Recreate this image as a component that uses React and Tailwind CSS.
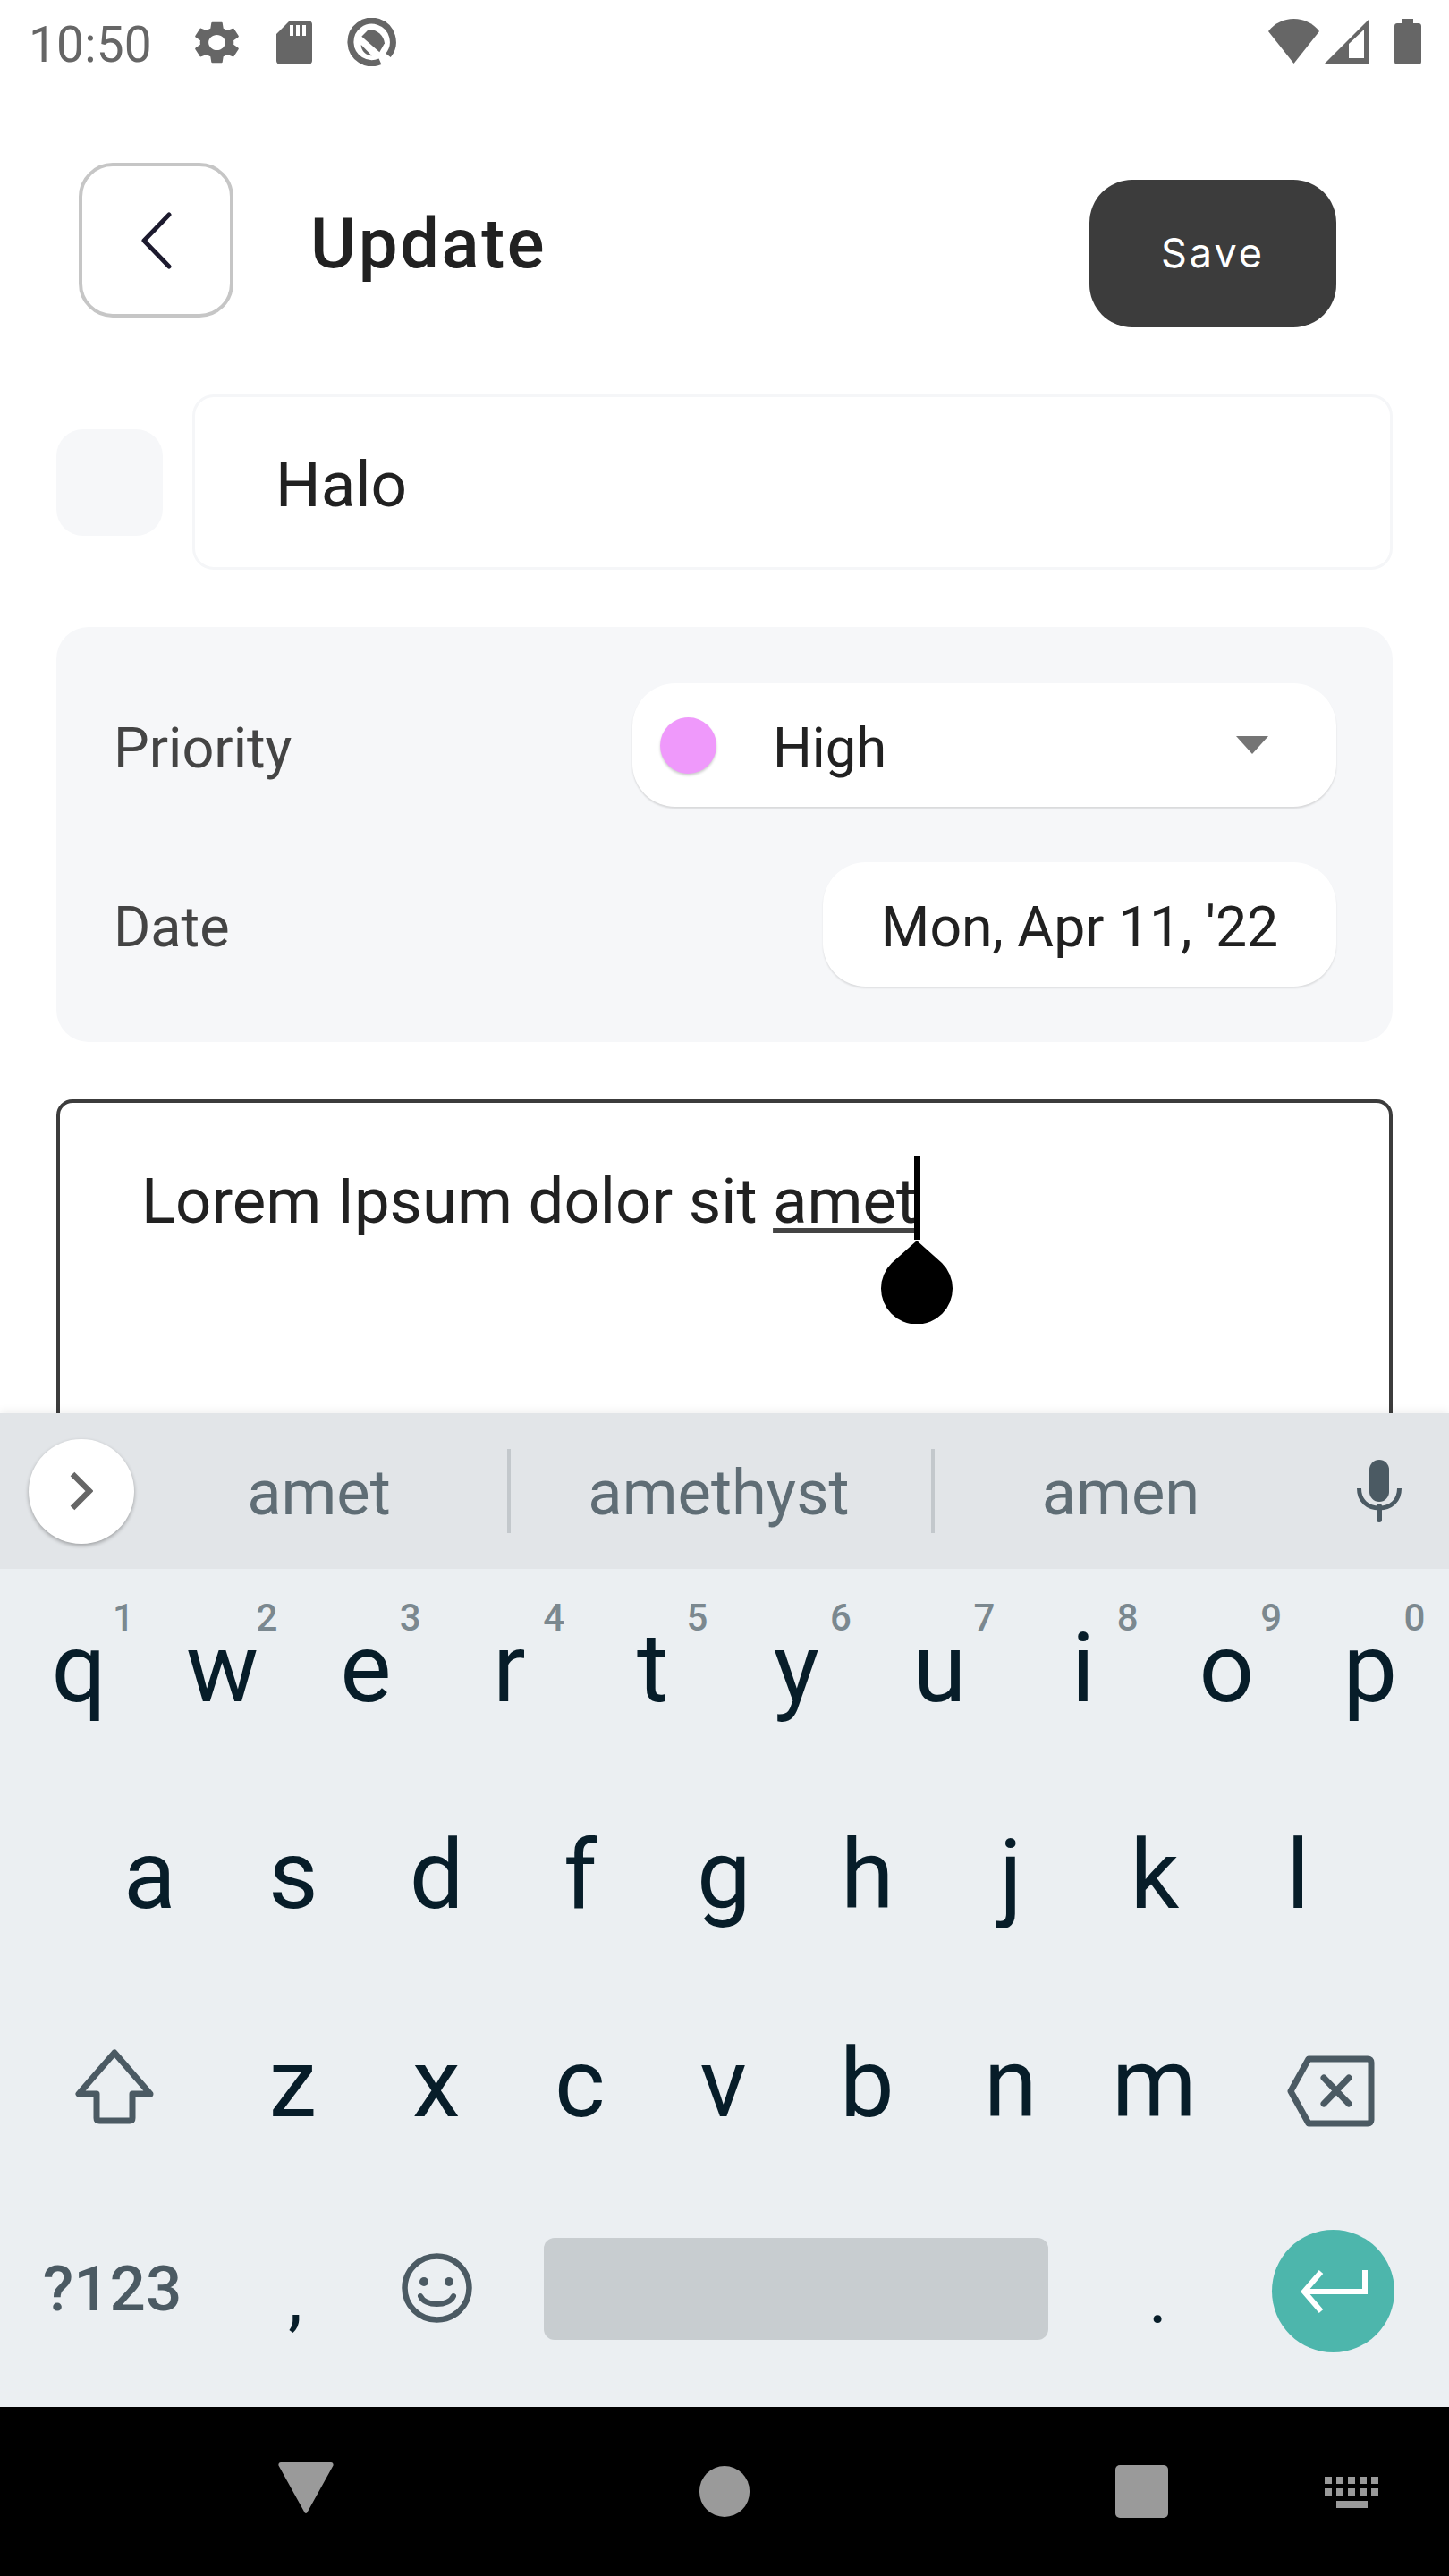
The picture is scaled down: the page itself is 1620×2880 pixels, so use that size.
const row1 = [['q','1'],['w','2'],['e','3'],['r','4'],['t','5'],['y','6'],['u','7'],['i','8'],['o','9'],['p','0']];
const row2 = ['a','s','d','f','g','h','j','k','l'];
const row3 = ['z','x','c','v','b','n','m'];

function Letter({ ch, digit, className }) {
  return (
    <div className={`relative flex h-full items-center justify-center text-[108px] text-[#071d29] ${className}`}>
      <span className="leading-[120px]">{ch}</span>
      {digit ? <span className="absolute left-[118px] top-[34px] text-[42px] font-medium leading-[42px] text-[#7b888f]">{digit}</span> : null}
    </div>
  );
}

function StatusBar() {
  return (
    <div className="flex h-[100px] shrink-0 items-start justify-between pl-[32px] pr-[31px] pt-[20px] text-[#666666]">
      <div className="flex items-start">
        <span className="text-[55px] leading-[60px] tracking-[0.2px]">10:50</span>
        <svg className="ml-[48px] mt-[3px] h-[49px] w-[49px]" viewBox="2.6 1.7 18.8 20.6" preserveAspectRatio="none" fill="currentColor">
          <path fillRule="evenodd" d="M19.14 12.94c.04-.3.06-.61.06-.94 0-.32-.02-.64-.07-.94l2.03-1.58c.18-.14.23-.41.12-.61l-1.92-3.32c-.12-.22-.37-.29-.59-.22l-2.39.96c-.5-.38-1.03-.7-1.62-.94l-.36-2.54c-.04-.24-.24-.41-.48-.41h-3.84c-.24 0-.43.17-.47.41l-.36 2.54c-.59.24-1.13.57-1.62.94l-2.39-.96c-.22-.08-.47 0-.59.22L2.74 8.87c-.12.21-.08.47.12.61l2.03 1.58c-.05.3-.09.63-.09.94s.02.64.07.94l-2.03 1.58c-.18.14-.23.41-.12.61l1.92 3.32c.12.22.37.29.59.22l2.39-.96c.5.38 1.03.7 1.62.94l.36 2.54c.05.24.24.41.48.41h3.84c.24 0 .44-.17.47-.41l.36-2.54c.59-.24 1.13-.56 1.62-.94l2.39.96c.22.08.47 0 .59-.22l1.92-3.32c.12-.22.07-.47-.12-.61l-2.01-1.58zM12 15.6c-1.98 0-3.6-1.62-3.6-3.6s1.62-3.6 3.6-3.6 3.6 1.62 3.6 3.6-1.62 3.6-3.6 3.6z" />
        </svg>
        <svg className="ml-[42px] mt-[3px] h-[49px] w-[40px]" viewBox="0 0 40 49" fill="currentColor">
          <path fillRule="evenodd" d="M15 0H36C38.2 0 40 1.8 40 4V45C40 47.2 38.2 49 36 49H4C1.800 49 0 47.2 0 45V15ZM15 5V17H19V5ZM22 5V17H26V5ZM29 5V17H33V5Z" />
        </svg>
        <svg className="ml-[39px] mt-0 h-[54px] w-[55px]" viewBox="0 0 55 54" fill="none">
          <path d="M37 48.700A23.700 23.700 0 1 1 46 41.900" stroke="#666666" strokeWidth="7" />
          <path d="M16.300 20.700L23.700 13.300C33 12.500 41 19 42 28.300L36.300 38.300Z" fill="#666666" />
          <path d="M15.700 30L27.700 42.300C22 42.500 15.500 37 15.700 30Z" fill="#666666" />
        </svg>
      </div>
      <div className="flex items-start">
        <svg className="mt-[1px] h-[50px] w-[57px]" viewBox="0 0 57 50" fill="#666666">
          <path d="M0 14C7 5 17 0 28.500 0C40 0 50 5 57 14L28.500 50Z" />
        </svg>
        <svg className="ml-[6px] mt-[2px] h-[49px] w-[49px]" viewBox="0 0 49 49" fill="#666666">
          <path fillRule="evenodd" d="M49 0V49H0ZM44 11L27 27V43H44Z" />
        </svg>
        <svg className="ml-[29px] mt-[1px] h-[51px] w-[30px]" viewBox="0 0 30 51" fill="#666666">
          <path d="M9 0H21V5H27C28.700 5 30 6.300 30 8V48C30 49.700 28.700 51 27 51H3C1.300 51 0 49.700 0 48V8C0 6.300 1.300 5 3 5H9Z" />
        </svg>
      </div>
    </div>
  );
}

function Header() {
  return (
    <div className="flex shrink-0 items-start justify-between pl-[88px] pr-[126px] pt-[82px]">
      <div className="flex items-start">
        <button className="flex h-[173px] w-[173px] items-center justify-center rounded-[38px] border-[4px] border-[#c6c6c6] bg-white">
          <svg className="h-[66px] w-[38px]" viewBox="0 0 38 66" fill="none">
            <path d="M33 4L5 33L33 62" stroke="#1c1a2e" strokeWidth="5" strokeLinecap="round" strokeLinejoin="round" />
          </svg>
        </button>
        <h1 className="ml-[86px] mt-[45px] text-[78px] font-medium leading-[92px] tracking-[2.6px] text-[#212121]">Update</h1>
      </div>
      <button className="mt-[19px] flex h-[165px] w-[276px] items-center justify-center rounded-[48px] bg-[#3c3c3c] pb-[2px] font-[Inter,sans-serif] text-[45px] tracking-[3px] text-white">Save</button>
    </div>
  );
}

function Fields() {
  return (
    <div className="shrink-0 px-[63px]">
      <div className="mt-[75px] flex items-center">
        <div className="h-[119px] w-[119px] rounded-[30px] bg-[#f6f7f9]" />
        <div className="ml-[33px] flex h-[196px] flex-1 items-center rounded-[24px] border-[3px] border-[#f5f6f8] bg-white pl-[90px] pt-[7px] text-[71px] text-[#212121]">Halo</div>
      </div>
      <div className="mt-[64px] flex h-[464px] flex-col gap-[62px] rounded-[36px] bg-[#f6f7f9] pl-[64px] pr-[63px] pt-[63px]">
        <div className="flex h-[138px] items-center justify-between">
          <span className="pt-[8px] text-[63px] text-[#444444]">Priority</span>
          <div className="flex h-[138px] w-[787px] items-center rounded-[48px] bg-white pl-[31px] shadow-[0_2px_2px_rgba(0,0,0,0.12)]">
            <span className="h-[63px] w-[63px] rounded-full bg-[#ef99fb] shadow-[0_2px_3px_rgba(0,0,0,0.2)]" />
            <span className="ml-[63px] flex-1 pt-[6px] text-[61.5px] text-[#212121]">High</span>
            <svg className="mr-[76px] h-[20px] w-[36px]" viewBox="0 0 36 20" fill="#757575"><path d="M0 0H36L18 20Z" /></svg>
          </div>
        </div>
        <div className="flex h-[139px] items-center justify-between">
          <span className="pt-[8px] text-[63px] text-[#444444]">Date</span>
          <div className="flex h-[139px] w-[574px] items-center justify-center rounded-[48px] bg-white pt-[7px] text-[62.5px] text-[#212121] shadow-[0_2px_2px_rgba(0,0,0,0.1)]">Mon, Apr 11, '22</div>
        </div>
      </div>
    </div>
  );
}

function Editor() {
  return (
    <div className="mx-[63px] mt-[64px] h-[600px] shrink-0 rounded-[18px] border-[4px] border-[#3c3c3c] bg-white pl-[91px] pt-[70px] text-[70.7px] leading-[80px] text-[#212121]">
      <span>Lorem Ipsum dolor sit <span className="underline decoration-[5px] decoration-[#444444] underline-offset-[6px]">amet</span></span>
      <span className="absolute left-[1022px] top-[1292px] h-[94px] w-[7px] bg-black" />
      <svg className="absolute left-[985px] top-[1387px] h-[93px] w-[80px]" viewBox="0 0 80 93" fill="#000">
        <path d="M40 0L12 25A40 40 0 1 0 68 25Z" />
      </svg>
    </div>
  );
}

function Suggestions() {
  return (
    <div className="relative flex h-[174px] shrink-0 items-center bg-[#e2e5e8] text-[70.5px] text-[#5f6d75]">
      <div className="ml-[32px] flex h-[117px] w-[118px] items-center justify-center rounded-full bg-white shadow-[0_2px_4px_rgba(0,0,0,0.3)]">
        <svg className="h-[44px] w-[26px]" viewBox="0 0 26 44" fill="none"><path d="M3 3L22 22L3 41" stroke="#666666" strokeWidth="6.500" /></svg>
      </div>
      <div className="ml-[18px] flex w-[399px] justify-center pr-[22px] pt-[5px]">amet</div>
      <div className="h-[94px] w-[4px] bg-[#c3c8cc]" />
      <div className="flex w-[470px] justify-center pr-[5px] pt-[5px]">amethyst</div>
      <div className="h-[94px] w-[4px] bg-[#c3c8cc]" />
      <div className="flex w-[472px] justify-center pr-[56px] pt-[5px]">amen</div>
      <svg className="ml-[0px] h-[70px] w-[50px]" viewBox="0 0 50 70" fill="none">
        <rect x="14" y="0" width="22" height="47" rx="11" fill="#4b5a63" />
        <path d="M2.500 32C2.500 46 12 54 25 54C38 54 47.500 46 47.500 32" stroke="#4b5a63" strokeWidth="5" />
        <path d="M25 52V67" stroke="#4b5a63" strokeWidth="6" strokeLinecap="round" />
      </svg>
    </div>
  );
}

function Keys() {
  return (
    <div className="flex h-[937px] shrink-0 flex-col bg-[#ebeff2]">
      <div className="grid h-[228px] shrink-0 grid-cols-10 px-[8px]">
        {row1.map(([c, d]) => <Letter key={c} ch={c} digit={d} className="pb-[6px]" />)}
      </div>
      <div className="flex h-[228px] shrink-0 pl-[87px]">
        {row2.map((c) => <Letter key={c} ch={c} className="w-[160.5px]" />)}
      </div>
      <div className="flex h-[238px] shrink-0">
        <div className="flex h-full w-[247px] items-center justify-center pl-[8px] pt-[8px]">
          <svg className="h-[84px] w-[88px]" viewBox="0 0 88 84" fill="none">
            <path d="M44 4L4 50H24V77C24 79 25 80 27 80H61C63 80 64 79 64 77V50H84Z" stroke="#4b5a63" strokeWidth="7" strokeLinejoin="round" />
          </svg>
        </div>
        {row3.map((c) => <Letter key={c} ch={c} className="w-[160.5px]" />)}
        <div className="flex h-full w-[249px] items-center justify-center pr-[15px] pt-[18px]">
          <svg className="h-[80px] w-[98px]" viewBox="0 0 98 80" fill="none">
            <path d="M24 4H90C92.500 4 94 5.500 94 8V72C94 74.500 92.500 76 90 76H24L4 40Z" stroke="#4b5a63" strokeWidth="7" strokeLinejoin="round" />
            <path d="M41 25L69 54M69 25L41 54" stroke="#4b5a63" strokeWidth="7" strokeLinecap="round" />
          </svg>
        </div>
      </div>
      <div className="flex h-[243px] shrink-0 items-center pl-[4px]">
        <div className="flex w-[243px] justify-center pb-[20px] text-[71px] font-medium text-[#4b5a63]">?123</div>
        <div className="flex w-[166px] justify-center text-[80px] text-[#071d29]">,</div>
        <div className="flex w-[150px] justify-center pb-[23px]">
          <svg className="h-[78px] w-[79px]" viewBox="0 0 79 78" fill="none">
            <ellipse cx="39.500" cy="39" rx="36" ry="35.500" stroke="#4b5a63" strokeWidth="6.500" />
            <circle cx="25" cy="32" r="5" fill="#4b5a63" />
            <circle cx="53" cy="32" r="5" fill="#4b5a63" />
            <path d="M21 48C26 60 53 60 58 48" stroke="#4b5a63" strokeWidth="6" strokeLinecap="round" />
          </svg>
        </div>
        <div className="mx-[45px] mb-[21px] h-[114px] w-[564px] rounded-[12px] bg-[#c8cdd0]" />
        <div className="flex w-[155px] justify-center text-[80px] text-[#071d29]">.</div>
        <div className="mb-[16px] ml-[50px] flex h-[137px] w-[137px] items-center justify-center rounded-full bg-[#4db6ac]">
          <svg className="h-[48px] w-[76px]" viewBox="0 0 76 48" fill="none">
            <path d="M73 0V24H6M24 2L5 24L24 46" stroke="#ffffff" strokeWidth="6" />
          </svg>
        </div>
      </div>
    </div>
  );
}

function NavBar() {
  return (
    <div className="relative flex h-[189px] shrink-0 items-start bg-black">
      <svg className="ml-[311px] mt-[62px] h-[57px] w-[62px]" viewBox="0 0 62 57" fill="#9a9a9a"><path d="M3 0H59C61 0 62 2 61.500 3.500L33 55C32 57.500 30 57.500 29 55L.5 3.500C0 2 1 0 3 0Z" /></svg>
      <div className="ml-[409px] mt-[66px] h-[57px] w-[56px] rounded-full bg-[#9a9a9a]" />
      <div className="ml-[409px] mt-[65px] h-[59px] w-[59px] rounded-[5px] bg-[#9a9a9a]" />
      <svg className="ml-[175px] mt-[78px] h-[35px] w-[61px]" viewBox="0 0 61 35" fill="#9a9a9a">
        {[0, 13, 26, 39, 52].map((x) => <rect key={`a${x}`} x={x} y="0" width="8" height="8" />)}
        {[0, 13, 26, 39, 52].map((x) => <rect key={`b${x}`} x={x} y="13" width="8" height="8" />)}
        <rect x="13" y="27" width="35" height="8" />
      </svg>
    </div>
  );
}

export default function App() {
  return (
    <div className="relative flex h-[2880px] w-[1620px] flex-col overflow-hidden bg-white font-[Roboto,sans-serif]">
      <div className="h-[1580px] shrink-0 overflow-hidden">
        <StatusBar />
        <Header />
        <Fields />
        <Editor />
      </div>
      <div className="relative z-10 shadow-[0_-4px_8px_rgba(0,0,0,0.05)]">
        <Suggestions />
        <Keys />
      </div>
      <NavBar />
    </div>
  );
}
